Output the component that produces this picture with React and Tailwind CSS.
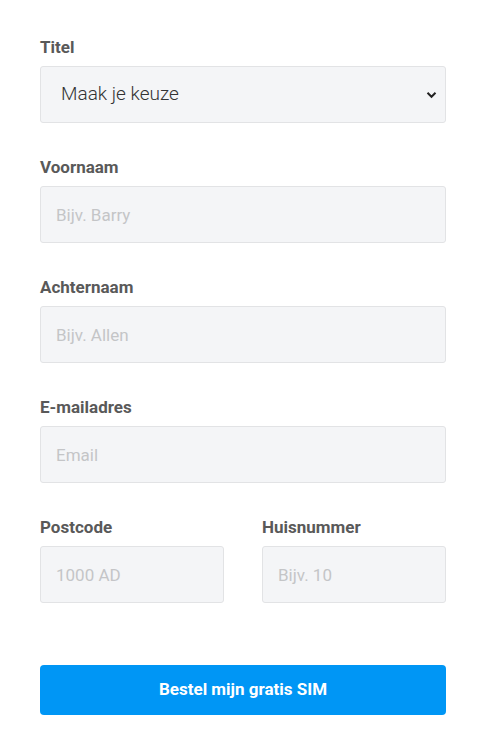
import React from "react";

const font = { fontFamily: "Roboto, 'Noto Sans', sans-serif" };

function Label({ children }) {
  return (
    <label className="block text-[17px] leading-[20px] font-bold text-[#595959] mb-[9px]">
      {children}
    </label>
  );
}

function Input({ placeholder }) {
  return (
    <input
      type="text"
      placeholder={placeholder}
      className="block w-full h-[57px] rounded-[3px] border border-[#e2e3e5] bg-[#f4f5f7] px-[15px] text-[17px] text-[#333] placeholder:text-[#c4c5c7] outline-none"
    />
  );
}

export default function App() {
  return (
    <div className="min-h-[755px] bg-white pt-[37px] px-[40px] w-[496px]" style={font}>
      <div className="w-[406px] flex flex-col gap-[34px]">
        <div>
          <Label>Titel</Label>
          <div className="relative">
            <select
              defaultValue=""
              className="block w-full h-[57px] appearance-none rounded-[3px] border border-[#e2e3e5] bg-[#f4f5f7] pl-[20px] pr-10 text-[19px] font-light text-[#333] outline-none"
            >
              <option value="">Maak je keuze</option>
              <option>Dhr.</option>
              <option>Mevr.</option>
            </select>
            <svg
              className="absolute right-[9px] top-[25px] pointer-events-none"
              width="11"
              height="8"
              viewBox="0 0 11 8"
              fill="none"
            >
              <path d="M1.5 1.8 L5.5 5.8 L9.5 1.8" stroke="#222" strokeWidth="2" />
            </svg>
          </div>
        </div>
        <div>
          <Label>Voornaam</Label>
          <Input placeholder="Bijv. Barry" />
        </div>
        <div>
          <Label>Achternaam</Label>
          <Input placeholder="Bijv. Allen" />
        </div>
        <div>
          <Label>E-mailadres</Label>
          <Input placeholder="Email" />
        </div>
        <div className="grid grid-cols-2 gap-[38px]">
          <div>
            <Label>Postcode</Label>
            <Input placeholder="1000 AD" />
          </div>
          <div>
            <Label>Huisnummer</Label>
            <Input placeholder="Bijv. 10" />
          </div>
        </div>
        <div className="pt-[28px]">
          <button
            type="button"
            className="block w-full h-[50px] rounded-[4px] bg-[#0096f5] text-white text-[17px] font-bold"
          >
            Bestel mijn gratis SIM
          </button>
        </div>
      </div>
    </div>
  );
}
